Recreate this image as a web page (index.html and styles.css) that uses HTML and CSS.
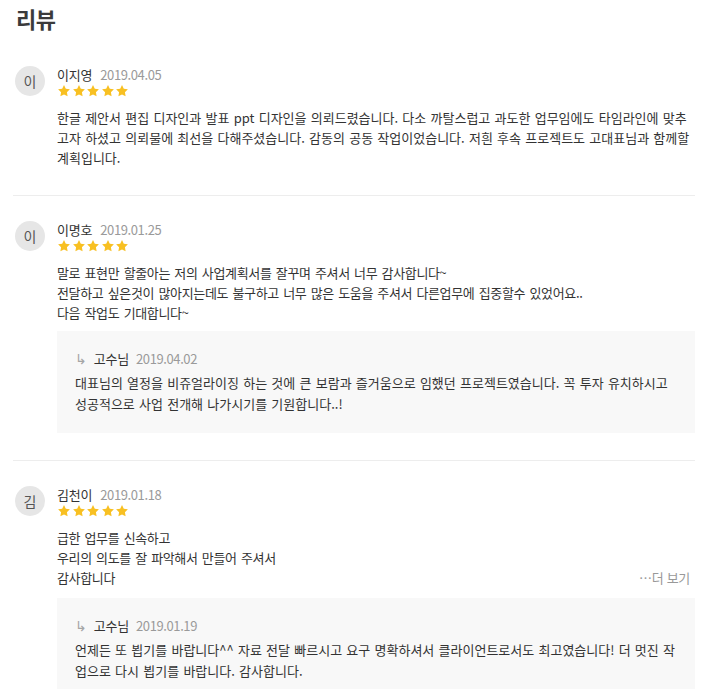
FILE: index.html
```html
<!DOCTYPE html>
<html lang="ko">
<head>
<meta charset="utf-8">
<title>리뷰</title>
<link rel="stylesheet" href="styles.css">
</head>
<body>
<section class="reviews">
  <h2 class="title">리뷰</h2>
  <ul class="review-list">
    <li class="review">
      <div class="avatar">이</div>
      <div class="body">
        <div class="meta"><span class="name">이지영</span><span class="date">2019.04.05</span></div>
        <div class="stars">
          <svg viewBox="0 0 24 24"><path d="M12 1.8l3.1 6.4 7 1-5.1 5 1.2 7L12 17.9l-6.2 3.3 1.2-7-5.1-5 7-1z"/></svg>
          <svg viewBox="0 0 24 24"><path d="M12 1.8l3.1 6.4 7 1-5.1 5 1.2 7L12 17.9l-6.2 3.3 1.2-7-5.1-5 7-1z"/></svg>
          <svg viewBox="0 0 24 24"><path d="M12 1.8l3.1 6.4 7 1-5.1 5 1.2 7L12 17.9l-6.2 3.3 1.2-7-5.1-5 7-1z"/></svg>
          <svg viewBox="0 0 24 24"><path d="M12 1.8l3.1 6.4 7 1-5.1 5 1.2 7L12 17.9l-6.2 3.3 1.2-7-5.1-5 7-1z"/></svg>
          <svg viewBox="0 0 24 24"><path d="M12 1.8l3.1 6.4 7 1-5.1 5 1.2 7L12 17.9l-6.2 3.3 1.2-7-5.1-5 7-1z"/></svg>
        </div>
        <p class="text text-wide">한글 제안서 편집 디자인과 발표 ppt 디자인을 의뢰드렸습니다. 다소 까탈스럽고 과도한 업무임에도 타임라인에 맞추고자 하셨고 의뢰물에 최선을 다해주셨습니다. 감동의 공동 작업이었습니다. 저흰 후속 프로젝트도 고대표님과 함께할 계획입니다.</p>
      </div>
    </li>
    <li class="review">
      <div class="avatar">이</div>
      <div class="body">
        <div class="meta"><span class="name">이명호</span><span class="date">2019.01.25</span></div>
        <div class="stars">
          <svg viewBox="0 0 24 24"><path d="M12 1.8l3.1 6.4 7 1-5.1 5 1.2 7L12 17.9l-6.2 3.3 1.2-7-5.1-5 7-1z"/></svg>
          <svg viewBox="0 0 24 24"><path d="M12 1.8l3.1 6.4 7 1-5.1 5 1.2 7L12 17.9l-6.2 3.3 1.2-7-5.1-5 7-1z"/></svg>
          <svg viewBox="0 0 24 24"><path d="M12 1.8l3.1 6.4 7 1-5.1 5 1.2 7L12 17.9l-6.2 3.3 1.2-7-5.1-5 7-1z"/></svg>
          <svg viewBox="0 0 24 24"><path d="M12 1.8l3.1 6.4 7 1-5.1 5 1.2 7L12 17.9l-6.2 3.3 1.2-7-5.1-5 7-1z"/></svg>
          <svg viewBox="0 0 24 24"><path d="M12 1.8l3.1 6.4 7 1-5.1 5 1.2 7L12 17.9l-6.2 3.3 1.2-7-5.1-5 7-1z"/></svg>
        </div>
        <p class="text">말로 표현만 할줄아는 저의 사업계획서를 잘꾸며 주셔서 너무 감사합니다~<br>전달하고 싶은것이 많아지는데도 불구하고 너무 많은 도움을 주셔서 다른업무에 집중할수 있었어요..<br>다음 작업도 기대합니다~</p>
        <div class="reply">
          <div class="reply-meta"><span class="arrow">↳</span><span class="name">고수님</span><span class="date">2019.04.02</span></div>
          <p class="reply-text">대표님의 열정을 비쥬얼라이징 하는 것에 큰 보람과 즐거움으로 임했던 프로젝트였습니다. 꼭 투자 유치하시고 성공적으로 사업 전개해 나가시기를 기원합니다..!</p>
        </div>
      </div>
    </li>
    <li class="review">
      <div class="avatar">김</div>
      <div class="body">
        <div class="meta"><span class="name">김천이</span><span class="date">2019.01.18</span></div>
        <div class="stars">
          <svg viewBox="0 0 24 24"><path d="M12 1.8l3.1 6.4 7 1-5.1 5 1.2 7L12 17.9l-6.2 3.3 1.2-7-5.1-5 7-1z"/></svg>
          <svg viewBox="0 0 24 24"><path d="M12 1.8l3.1 6.4 7 1-5.1 5 1.2 7L12 17.9l-6.2 3.3 1.2-7-5.1-5 7-1z"/></svg>
          <svg viewBox="0 0 24 24"><path d="M12 1.8l3.1 6.4 7 1-5.1 5 1.2 7L12 17.9l-6.2 3.3 1.2-7-5.1-5 7-1z"/></svg>
          <svg viewBox="0 0 24 24"><path d="M12 1.8l3.1 6.4 7 1-5.1 5 1.2 7L12 17.9l-6.2 3.3 1.2-7-5.1-5 7-1z"/></svg>
          <svg viewBox="0 0 24 24"><path d="M12 1.8l3.1 6.4 7 1-5.1 5 1.2 7L12 17.9l-6.2 3.3 1.2-7-5.1-5 7-1z"/></svg>
        </div>
        <div class="text-row">
          <p class="text">급한 업무를 신속하고<br>우리의 의도를 잘 파악해서 만들어 주셔서<br>감사합니다</p>
          <span class="more">⋯더 보기</span>
        </div>
        <div class="reply">
          <div class="reply-meta"><span class="arrow">↳</span><span class="name">고수님</span><span class="date">2019.01.19</span></div>
          <p class="reply-text">언제든 또 뵙기를 바랍니다^^ 자료 전달 빠르시고 요구 명확하셔서 클라이언트로서도 최고였습니다! 더 멋진 작업으로 다시 뵙기를 바랍니다. 감사합니다.</p>
        </div>
      </div>
    </li>
  </ul>
</section>
</body>
</html>
```

FILE: styles.css
```css
* {
  box-sizing: border-box;
}

body {
  margin: 0;
  background: #ffffff;
  color: #333333;
  font-family: "Noto Sans CJK KR", "Noto Sans", sans-serif;
}

.reviews {
  padding: 0 15px 0 13px;
}

.title {
  margin: 0 0 0 3px;
  font-size: 22px;
  font-weight: 700;
  line-height: 36px;
  letter-spacing: -0.5px;
  color: #3b3b3b;
}

.review-list {
  list-style: none;
  margin: 30px 0 0;
  padding: 0;
}

.review {
  display: flex;
  gap: 12px;
  padding: 0 0 27px 2px;
  border-bottom: 1px solid #ededed;
}

.review + .review {
  padding-top: 25px;
}

.review:last-child {
  border-bottom: none;
}

.avatar {
  flex: none;
  width: 30px;
  height: 30px;
  border-radius: 50%;
  background: #e6e6e6;
  color: #555555;
  font-size: 14px;
  display: flex;
  align-items: center;
  justify-content: center;
}

.body {
  flex: 1;
  min-width: 0;
}

.meta {
  display: flex;
  align-items: center;
  gap: 8px;
  height: 18px;
  line-height: 18px;
}

.name {
  font-size: 13px;
  color: #333333;
  letter-spacing: -0.2px;
}

.date {
  font-size: 13px;
  color: #9a9a9a;
  letter-spacing: -0.4px;
}

.stars {
  display: flex;
  gap: 0.5px;
  height: 14px;
  align-items: center;
}

.stars svg {
  width: 14px;
  height: 14px;
  fill: #f8c022;
}

.text {
  margin: 10px 0 0;
  font-size: 13px;
  line-height: 20px;
  letter-spacing: -0.35px;
  word-spacing: 1px;
  color: #333333;
}

.text-wide {
  letter-spacing: 0;
  word-spacing: 0.6px;
}

.text-row {
  display: flex;
  justify-content: space-between;
  align-items: flex-end;
}

.more {
  font-size: 13px;
  line-height: 20px;
  color: #999999;
  letter-spacing: -0.3px;
  padding-right: 5px;
}

.reply {
  margin-top: 8px;
  background: #f8f8f8;
  padding: 18px 14px 19px 18px;
}

.text-row + .reply {
  margin-top: 10px;
}

.reply-meta {
  display: flex;
  align-items: center;
  gap: 7px;
  line-height: 20px;
}

.arrow {
  color: #a5a5a5;
  font-family: "DejaVu Sans", sans-serif;
  font-size: 14px;
}

.reply-text {
  margin: 3px 0 0;
  font-size: 13px;
  line-height: 21px;
  letter-spacing: 0;
  word-spacing: 0.6px;
  color: #333333;
}
```
